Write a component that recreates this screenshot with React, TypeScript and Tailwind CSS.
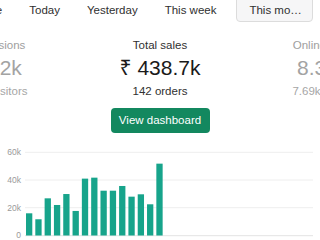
import React from "react";

const font = { fontFamily: '"Liberation Sans", "Noto Sans", "DejaVu Sans", sans-serif' };

const tabs = ["Custom range", "Today", "Yesterday", "This week"];

// daily sales, in thousands
const sales = [16, 11.7, 26.8, 22, 29.9, 17.7, 41, 41.7, 32.3, 32.3, 35.7, 28, 29.7, 22.5, 51.8];

const base = 235.5;
const perK = 1.387;

const Stat = ({
  label,
  value,
  sub,
  muted,
}: {
  label: string;
  value: string;
  sub: string;
  muted?: boolean;
}) => (
  <div className="flex flex-col items-center shrink-0 whitespace-nowrap">
    <div className={`text-[11.5px] leading-[14px] ${muted ? "text-[#9e9e9e]" : "text-[#303030]"}`}>
      {label}
    </div>
    <div
      className={`mt-[3px] text-[21px] leading-[26px] ${muted ? "text-[#a3a3a3]" : "text-[#1a1a1a]"}`}
    >
      {value}
    </div>
    <div className={`mt-[3px] text-[11.5px] leading-[14px] ${muted ? "text-[#a6a6a6]" : "text-[#303030]"}`}>
      {sub}
    </div>
  </div>
);

const SalesChart = () => (
  <svg className="block mt-[7px]" width="320" height="100" viewBox="0 140 320 100">
    {[152.3, 180, 207.7].map((y) => (
      <line key={y} x1="25" x2="313" y1={y} y2={y} stroke="#eeeeee" strokeWidth="1" />
    ))}
    <line x1="25" x2="313" y1="235.7" y2="235.7" stroke="#e3e3e3" strokeWidth="1" />
    {[
      ["60k", 155],
      ["40k", 183.3],
      ["20k", 210.6],
      ["0", 237.6],
    ].map(([t, y]) => (
      <text key={t} x="21" y={y} textAnchor="end" fontSize="8.5" fill="#9a9a9a" style={font}>
        {t}
      </text>
    ))}
    {sales.map((v, i) => (
      <rect
        key={i}
        x={26 + i * 9.31}
        y={base - v * perK}
        width="6.3"
        height={v * perK}
        fill="#17a48b"
      />
    ))}
  </svg>
);

export default function App() {
  return (
    <div className="w-[320px] h-[240px] overflow-hidden bg-white" style={font}>
      {/* Date range tabs */}
      <div className="flex items-center h-[22px] overflow-hidden text-[11.5px] text-[#303030] whitespace-nowrap">
        {tabs.map((t, i) => (
          <div key={t} className={`px-[12px] shrink-0 ${i === 0 ? "ml-[-82px]" : "ml-[3px]"}`}>
            {t}
          </div>
        ))}
        <div className="ml-[8px] shrink-0 w-[77px] h-[26px] mt-[-4px] pt-[3px] flex items-center pl-[12px] pr-[9px] border border-[#dcdcdc] rounded-[4px] bg-[#f6f6f7]">
          <span className="truncate">This month</span>
        </div>
      </div>

      {/* Summary carousel */}
      <div className="flex gap-[92px] mt-[16px] overflow-hidden">
        <div className="flex flex-1 basis-0 min-w-0 justify-end">
          <Stat label="Sessions" value="1.2k" sub="1k visitors" muted />
        </div>
        <Stat label="Total sales" value="₹ 438.7k" sub="142 orders" />
        <div className="flex flex-1 basis-0 min-w-0 justify-start">
          <Stat label="Online rate" value="8.3%" sub="7.69k visits" muted />
        </div>
      </div>

      <div className="flex justify-center mt-[10px]">
        <button className="h-[25px] w-[99px] rounded-[4px] bg-[#13885f] text-white text-[11.5px]">
          View dashboard
        </button>
      </div>

      <SalesChart />
    </div>
  );
}
